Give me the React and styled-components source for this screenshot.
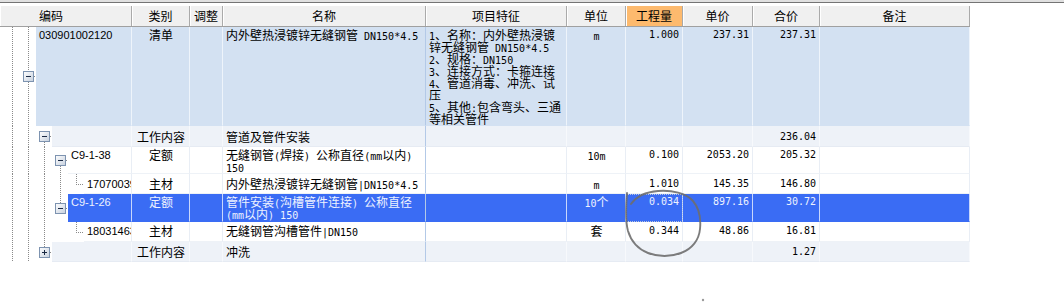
import React from 'react';
import styled, { createGlobalStyle, css } from 'styled-components';

const Global = createGlobalStyle`
  html, body { margin: 0; padding: 0; background: #fff; }
  body {
    font-family: "Noto Sans CJK SC", "Liberation Sans", sans-serif;
    font-size: 12px;
    color: #000;
  }
`;

const COLS = '132px 58px 33px 203px 141px 59px 57px 70px 67px 150px';

const TONES = {
  bill: { bg: '#d3e1f2', fg: '#000', vline: '#eef4fb', hline: '#d3e1f2' },
  work: { bg: '#eef2f8', fg: '#000', vline: '#f7f9fc', hline: '#e6ebf3' },
  plain: { bg: '#ffffff', fg: '#000', vline: '#e9eef5', hline: '#eef2f7' },
  sel: { bg: '#3a6cf4', fg: '#eef2ff', vline: '#c9d7fc', hline: '#3a6cf4' },
};

const Page = styled.div`
  position: relative;
  width: 1064px;
  height: 307px;
  overflow: hidden;
  background: #fff;
`;

const TopRule = styled.div`
  height: 2px;
  background: #e0e0e0;
  border-bottom: 1px solid #747474;
  margin-bottom: 3px;
`;

const Table = styled.div`
  width: 970px;
  display: flex;
  flex-direction: column;
`;

const HeaderRow = styled.div`
  display: grid;
  grid-template-columns: ${COLS};
  height: 20px;
  background: #f0f0f0;
  border-bottom: 1px solid #a0a0a0;
`;

const HeaderCell = styled.div`
  display: flex;
  align-items: center;
  justify-content: ${(p) => (p.$left ? 'flex-start' : 'center')};
  padding-left: ${(p) => (p.$left ? '39px' : '0')};
  box-sizing: border-box;
  border-right: 1px solid #aaaaaa;
  box-shadow: inset 1px 0 0 #ffffff;
  background: ${(p) => (p.$hot ? '#fdba6e' : 'transparent')};
  font-size: 12px;
  line-height: 12px;
  white-space: nowrap;
`;

const Row = styled.div`
  display: grid;
  grid-template-columns: ${COLS};
  height: ${(p) => p.$h}px;
  --bg: ${(p) => TONES[p.$tone].bg};
  --fg: ${(p) => TONES[p.$tone].fg};
  --vline: ${(p) => TONES[p.$tone].vline};
  --hline: ${(p) => TONES[p.$tone].hline};
  --pad: ${(p) => p.$pad}px;
`;

const Cell = styled.div`
  box-sizing: border-box;
  background: var(--bg);
  color: var(--fg);
  border-right: 1px solid ${(p) => (p.$strong ? '#b3c9e7' : 'var(--vline)')};
  border-bottom: 1px solid var(--hline);
  padding: var(--pad) ${(p) => (p.$align === 'right' ? '3px' : '2px')} 0 3px;
  text-align: ${(p) => p.$align || 'left'};
  font-size: 12px;
  line-height: 12px;
  white-space: pre;
  overflow: hidden;
  min-width: 0;
  ${(p) =>
    p.$focus &&
    css`
      outline: 1px dotted #b9c6e0;
      outline-offset: -1px;
    `}
`;

const NumCell = styled(Cell)`
  font-family: "DejaVu Sans Mono", "Liberation Mono", monospace;
  font-size: 10px;
  text-align: right;
  padding-right: 3px;
`;

const TreeCell = styled.div`
  display: flex;
  min-width: 0;
  background: #fff;
`;

const CodeCell = styled(Cell)`
  flex: 1;
  font-family: "Liberation Sans", "DejaVu Sans", sans-serif;
  font-size: 11px;
  white-space: nowrap;
  text-overflow: clip;
`;

const Latin = styled.span`
  font-family: "DejaVu Sans Mono", "Liberation Mono", monospace;
  font-size: 10px;
  line-height: 0;
`;

const dotV = css`
  background-image: repeating-linear-gradient(to bottom, #8a8a8a 0 1px, transparent 1px 2px);
  background-size: 1px 100%;
  background-position: 12px 0;
  background-repeat: no-repeat;
`;

const Pipe = styled.div`
  width: 16px;
  flex: none;
  ${(p) => p.$on && dotV}
`;

const NodeSlot = styled.div`
  width: 20px;
  flex: none;
  display: flex;
  flex-direction: column;
`;

const Half = styled.div`
  flex: 1;
  ${(p) => p.$on && dotV}
`;

const NodeMid = styled.div`
  display: flex;
  align-items: center;
  height: ${(p) => (p.$leaf ? 1 : 11)}px;
  padding-left: ${(p) => (p.$leaf ? 12 : 7)}px;
`;

const HDots = styled.div`
  flex: 1;
  height: 1px;
  background: repeating-linear-gradient(to right, #8a8a8a 0 1px, transparent 1px 2px);
`;

const ExpanderSvg = styled.svg`
  flex: none;
  display: block;
`;

const Annotation = styled.svg`
  position: absolute;
  left: 0;
  top: 0;
  pointer-events: none;
`;

const Expander = ({ open }) => (
  <ExpanderSvg width="11" height="11" viewBox="0 0 11 11">
    <defs>
      <linearGradient id="exg" x1="0" y1="0" x2="1" y2="1">
        <stop offset="0" stopColor="#ffffff" />
        <stop offset="1" stopColor="#c6d0de" />
      </linearGradient>
    </defs>
    <rect x="0.5" y="0.5" width="10" height="10" fill="url(#exg)" stroke="#7d93b0" />
    <path d="M3 5.5h5" stroke="#1b2a44" strokeWidth="1" />
    {!open && <path d="M5.5 3v5" stroke="#1b2a44" strokeWidth="1" />}
  </ExpanderSvg>
);

const Mixed = ({ text }) =>
  (text || '').split(/([\x20-\x7e]+)/).map((s, i) => (i % 2 ? <Latin key={i}>{s}</Latin> : s));

const P = (on) => ({ k: 'pipe', on });
const N = (up, down, open) => ({ k: 'node', up, down, open });
const L = () => ({ k: 'leaf' });

const Gutter = ({ items }) =>
  items.map((it, i) => {
    if (it.k === 'pipe') return <Pipe key={i} $on={it.on} />;
    if (it.k === 'leaf')
      return (
        <NodeSlot key={i}>
          <Half $on />
          <NodeMid $leaf>
            <HDots />
          </NodeMid>
          <Half />
        </NodeSlot>
      );
    return (
      <NodeSlot key={i}>
        <Half $on={it.up} />
        <NodeMid>
          <Expander open={it.open} />
          <HDots />
        </NodeMid>
        <Half $on={it.down} />
      </NodeSlot>
    );
  });

const FEAT =
  '1、名称：内外壁热浸镀\n锌无缝钢管 DN150*4.5\n2、规格：DN150\n3、连接方式：卡箍连接\n4、管道消毒、冲洗、试\n压\n5、其他:包含弯头、三通\n等相关管件';

const ROWS = [
  { id: 1, h: 99, tone: 'bill', pad: 2, tree: [P(1), N(1, 1, 1)], code: '030901002120', kind: '清单', name: '内外壁热浸镀锌无缝钢管 DN150*4.5', feat: FEAT, unit: 'm', qty: '1.000', price: '237.31', total: '237.31' },
  { id: 2, h: 21, tone: 'work', pad: 5, tree: [P(1), P(1), N(0, 1, 1)], code: '', kind: '工作内容', name: '管道及管件安装', total: '236.04' },
  { id: 3, h: 27, tone: 'plain', pad: 2, tree: [P(1), P(1), P(1), N(0, 1, 1)], code: 'C9-1-38', kind: '定额', name: '无缝钢管(焊接) 公称直径(mm以内)\n150', unit: '10m', qty: '0.100', price: '2053.20', total: '205.32' },
  { id: 4, h: 20, tone: 'plain', pad: 4, tree: [P(1), P(1), P(1), P(1), L()], code: '17070039', kind: '主材', name: '内外壁热浸镀锌无缝钢管|DN150*4.5', unit: 'm', qty: '1.010', price: '145.35', total: '146.80' },
  { id: 5, h: 28, tone: 'sel', pad: 2, tree: [P(1), P(1), P(1), N(1, 0, 1)], code: 'C9-1-26', kind: '定额', name: '管件安装(沟槽管件连接) 公称直径\n(mm以内) 150', unit: '10个', qty: '0.034', price: '897.16', total: '30.72', focus: true },
  { id: 6, h: 20, tone: 'plain', pad: 3, tree: [P(1), P(1), P(1), P(0), L()], code: '18031463', kind: '主材', name: '无缝钢管沟槽管件|DN150', unit: '套', qty: '0.344', price: '48.86', total: '16.81' },
  { id: 7, h: 20, tone: 'work', pad: 4, tree: [P(1), P(1), N(1, 0, 0)], code: '', kind: '工作内容', name: '冲洗', total: '1.27' },
];

const HEADERS = ['类别', '调整', '名称', '项目特征', '单位', '工程量', '单价', '合价', '备注'];

export default function App() {
  return (
    <Page>
      <Global />
      <TopRule />
      <Table>
        <HeaderRow>
          <HeaderCell $left>编码</HeaderCell>
          {HEADERS.map((h) => (
            <HeaderCell key={h} $hot={h === '工程量'}>
              {h}
            </HeaderCell>
          ))}
        </HeaderRow>
        {ROWS.map((r) => (
          <Row key={r.id} $h={r.h} $tone={r.tone} $pad={r.pad}>
            <TreeCell>
              <Gutter items={r.tree} />
              <CodeCell>{r.code}</CodeCell>
            </TreeCell>
            <Cell $align="center">
              <Mixed text={r.kind} />
            </Cell>
            <Cell />
            <Cell $strong>
              <Mixed text={r.name} />
            </Cell>
            <Cell>
              <Mixed text={r.feat} />
            </Cell>
            <Cell $align="center">
              <Mixed text={r.unit} />
            </Cell>
            <NumCell $focus={r.focus}>{r.qty}</NumCell>
            <NumCell>{r.price}</NumCell>
            <NumCell>{r.total}</NumCell>
            <Cell />
          </Row>
        ))}
      </Table>
      <Annotation width="1064" height="307" viewBox="0 0 1064 307">
        <path
          d="M631 204 C636 197 645 192 658 191 C672 190 686 193 693 201 C699 208 701 219 700 229 C699 240 692 249 681 253 C671 257 658 257 648 253 C638 249 631 241 628 231 C625 220 626 205 627 193"
          fill="none"
          stroke="#6e6e6e"
          strokeWidth="1.9"
          strokeLinecap="round"
          opacity="0.9"
        />
        <circle cx="703" cy="300" r="1.2" fill="#9a9a9a" />
      </Annotation>
    </Page>
  );
}
